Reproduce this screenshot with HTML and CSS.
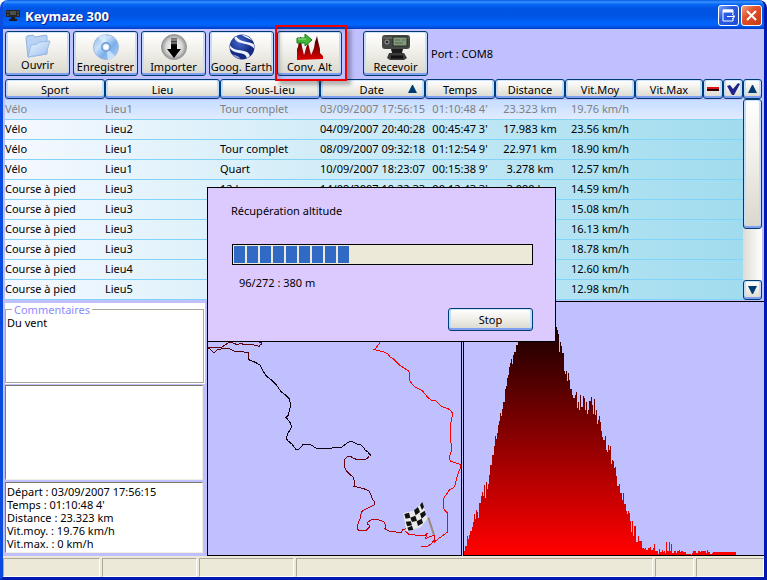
FILE: index.html
```html
<!DOCTYPE html>
<html lang="fr">

<head>
  <title>Keymaze 300</title>
  <meta charset="utf-8">
  <meta name="viewport" content="width=device-width, initial-scale=1">
  <link rel="stylesheet" href="styles.css">
</head>
<body>
  <div class="window">
    <header class="titlebar">
      <svg class="app-icon" viewBox="0 0 16 16" width="16" height="16">
        <rect x="1" y="2" width="14" height="7" rx="1" fill="#252525"/>
        <rect x="5" y="3" width="6" height="4" fill="#4c524a"/>
        <path d="M2 4h2M12 4h2M2 7h2M12 7h2" stroke="#666"/>
        <path d="M6 9h4v2h2v2H4v-2h2z" fill="#1b1b1b"/>
      </svg>
      <h1>Keymaze 300</h1>
      <button class="win-btn" aria-label="Réduire">
        <svg viewBox="0 0 19 19" width="19" height="19">
          <path d="M14 8V4H4v11h10v-3" fill="none" stroke="#fff"/>
          <path d="M4 5h10" stroke="#fff" stroke-width="3"/>
          <path d="M8 10.500h7M13 8l3 2.500-3 2.500" fill="none" stroke="#fff"/>
        </svg>
      </button>
      <button class="win-btn close" aria-label="Fermer">
        <svg viewBox="0 0 19 19" width="19" height="19">
          <path d="M5 5l9 9M14 5l-9 9" stroke="#fff" stroke-width="2"/>
        </svg>
      </button>
    </header>

    <nav class="toolbar">
      <button class="btn tool open">
        <svg viewBox="0 0 26 24" width="26" height="24">
          <defs>
            <linearGradient id="folder" x1="0" y1="0" x2="1" y2="1">
              <stop offset="0" stop-color="#eaf4ff"/>
              <stop offset="1" stop-color="#9cc0ef"/>
            </linearGradient>
          </defs>
          <path d="M1 4l1-2 6-1 2 2 11-2 1 1v18L3 23z" fill="#b9d3f4" stroke="#8fb0dc"/>
          <path d="M3 23l3-12 6-1 2-2 11-1-4 13z" fill="url(#folder)" stroke="#9ab9e4"/>
        </svg>
        Ouvrir
      </button>
      <button class="btn tool">
        <svg viewBox="0 0 26 26" width="26" height="26">
          <defs>
            <linearGradient id="disc" x1="0" y1="0" x2="1" y2="1">
              <stop offset="0" stop-color="#8bb4e4"/>
              <stop offset=".35" stop-color="#c8e2fa"/>
              <stop offset=".6" stop-color="#7caeea"/>
              <stop offset="1" stop-color="#b3d3f6"/>
            </linearGradient>
          </defs>
          <circle cx="13" cy="13" r="12.500" fill="url(#disc)" stroke="#9fb8d8"/>
          <path d="M13 13L5 3a13 13 0 0 1 8-3zM13 13l9 9a13 13 0 0 1-7 4z" fill="#dcefff" opacity=".7"/>
          <circle cx="13" cy="13" r="5" fill="#6e9fd8"/>
          <circle cx="13" cy="13" r="3" fill="#fff" stroke="#d5e4f4"/>
        </svg>
        Enregistrer
      </button>
      <button class="btn tool">
        <svg viewBox="0 0 26 26" width="26" height="26">
          <defs>
            <radialGradient id="ball">
              <stop offset="0" stop-color="#fff"/>
              <stop offset=".65" stop-color="#d8d8d8"/>
              <stop offset="1" stop-color="#909090"/>
            </radialGradient>
            <linearGradient id="arrow" x1="0" y1="0" x2="0" y2="1">
              <stop offset="0" stop-color="#777"/>
              <stop offset=".4" stop-color="#000"/>
            </linearGradient>
          </defs>
          <circle cx="13" cy="13" r="12.500" fill="url(#ball)" stroke="#999"/>
          <path d="M10 4h6v11h4l-7 9-7-9h4z" fill="url(#arrow)"/>
          <path d="M10 6h6M10 9h6" stroke="#aaa"/>
        </svg>
        Importer
      </button>
      <button class="btn tool">
        <svg viewBox="0 0 26 26" width="26" height="26">
          <defs>
            <radialGradient id="globe" cx=".4" cy=".3">
              <stop offset="0" stop-color="#4468cc"/>
              <stop offset="1" stop-color="#142a84"/>
            </radialGradient>
            <clipPath id="globe-clip"><circle cx="13" cy="13" r="12"/></clipPath>
          </defs>
          <circle cx="13" cy="13" r="12.500" fill="url(#globe)"/>
          <g clip-path="url(#globe-clip)" fill="#edf3fc">
            <path d="M5 2c0 7 9 7 15 9 3 1 5 3 6 5v-5C22 7 9 9 7 1z"/>
            <path d="M0 9c3 9 12 6 18 9 2 1 3 3 3 6l-3 1c-1-7-7-5-12-7-3-1-5-3-6-5z"/>
            <path d="M12 0c3 4 9 4 13 8l-1-4-7-4z"/>
            <path d="M1 18c2 3 6 3 9 5l2 3-4 0z" opacity=".6"/>
          </g>
        </svg>
        Goog. Earth
      </button>
      <div class="highlight">
        <button class="btn tool">
          <svg viewBox="0 0 28 26" width="28" height="26">
            <defs>
              <linearGradient id="peaks" x1="0" y1="0" x2="0" y2="1">
                <stop offset="0" stop-color="#300"/>
                <stop offset="1" stop-color="#e00000"/>
              </linearGradient>
            </defs>
            <path d="M1 26V15l1-2 1-6h1V3h1v4l1 6 1 4 1 4 1-3 1-4 2-5 1 4 1 4 1 4 1-2 2-5 1-6 2-6 1 5 1 4 1 4v4l3 3v3z" fill="url(#peaks)"/>
            <path d="M1 4h8V0l7 6-7 6V9H1z" fill="#3fb834" stroke="#197c18"/>
            <path d="M2 5h8" stroke="#a0e890"/>
          </svg>
          Conv. Alt
        </button>
      </div>
      <button class="btn tool receive">
        <svg viewBox="0 0 30 26" width="30" height="26">
          <rect x="1" y="1" width="28" height="14" rx="3" fill="#444845"/>
          <path d="M2 4h26" stroke="#777a76"/>
          <rect x="12" y="3" width="14" height="9" fill="#84997c" stroke="#272b27"/>
          <path d="M14 6h5M14 9h8M21 6h3" stroke="#53684e"/>
          <circle cx="6" cy="8" r="2" fill="#222" stroke="#aaa"/>
          <path d="M10 15h12l-1 4H11z" fill="#1b1b1b"/>
          <path d="M8 19h15l3 5-3 2H9l-3-2z" fill="#3b3b3b"/>
          <path d="M10 23h12" stroke="#111" stroke-width="3"/>
        </svg>
        Recevoir
      </button>
      <span class="port">Port : COM8</span>
    </nav>

    <section class="sessions">
      <table class="grid">
        <colgroup>
          <col class="c-sport"><col class="c-lieu"><col class="c-sub"><col class="c-date"><col class="c-num"><col class="c-num"><col class="c-num"><col><col class="c-icon"><col class="c-icon">
        </colgroup>
        <thead>
          <tr>
            <th><button class="btn head">Sport</button></th>
            <th><button class="btn head">Lieu</button></th>
            <th><button class="btn head">Sous-Lieu</button></th>
            <th><button class="btn head sorted">Date
              <svg viewBox="0 0 9 8" width="9" height="8"><path d="M4 0h1l4 8H0z" fill="#003c74"/></svg></button></th>
            <th><button class="btn head">Temps</button></th>
            <th><button class="btn head">Distance</button></th>
            <th><button class="btn head">Vit.Moy</button></th>
            <th><button class="btn head">Vit.Max</button></th>
            <th><button class="btn head" aria-label="Supprimer">
              <svg viewBox="0 0 12 4" width="12" height="4"><path d="M0 0h12v4H0z" fill="#300"/><path d="M0 0h12v2H0z" fill="#e01010"/></svg></button></th>
            <th><button class="btn head" aria-label="Valider">
              <svg viewBox="0 0 13 12" width="13" height="12"><path d="M0 3l3-1 3 4 5-6 2 1-6 11H5z" fill="#22228c"/></svg></button></th>
          </tr>
        </thead>
        <tbody>
          <tr class="selected"><td>Vélo</td><td>Lieu1</td><td>Tour complet</td><td>03/09/2007 17:56:15</td><td>01:10:48 4'</td><td>23.323 km</td><td>19.76 km/h</td><td colspan="3"></td></tr>
          <tr><td>Vélo</td><td>Lieu2</td><td></td><td>04/09/2007 20:40:28</td><td>00:45:47 3'</td><td>17.983 km</td><td>23.56 km/h</td><td colspan="3"></td></tr>
          <tr><td>Vélo</td><td>Lieu1</td><td>Tour complet</td><td>08/09/2007 09:32:18</td><td>01:12:54 9'</td><td>22.971 km</td><td>18.90 km/h</td><td colspan="3"></td></tr>
          <tr><td>Vélo</td><td>Lieu1</td><td>Quart</td><td>10/09/2007 18:23:07</td><td>00:15:38 9'</td><td>3.278 km</td><td>12.57 km/h</td><td colspan="3"></td></tr>
          <tr><td>Course à pied</td><td>Lieu3</td><td>12 km</td><td>14/09/2007 19:22:33</td><td>00:12:43 3'</td><td>3.090 km</td><td>14.59 km/h</td><td colspan="3"></td></tr>
          <tr><td>Course à pied</td><td>Lieu3</td><td></td><td></td><td></td><td></td><td>15.08 km/h</td><td colspan="3"></td></tr>
          <tr><td>Course à pied</td><td>Lieu3</td><td></td><td></td><td></td><td></td><td>16.13 km/h</td><td colspan="3"></td></tr>
          <tr><td>Course à pied</td><td>Lieu3</td><td></td><td></td><td></td><td></td><td>18.78 km/h</td><td colspan="3"></td></tr>
          <tr><td>Course à pied</td><td>Lieu4</td><td></td><td></td><td></td><td></td><td>12.60 km/h</td><td colspan="3"></td></tr>
          <tr><td>Course à pied</td><td>Lieu5</td><td></td><td></td><td></td><td></td><td>12.98 km/h</td><td colspan="3"></td></tr>
        </tbody>
      </table>
      <div class="scrollbar">
        <button class="btn head" aria-label="Monter">
          <svg viewBox="0 0 9 8" width="9" height="8"><path d="M4 0h1l4 8H0z" fill="#003c74"/></svg>
        </button>
        <div class="track"><div class="btn thumb"></div></div>
        <button class="btn head" aria-label="Descendre">
          <svg viewBox="0 0 9 8" width="9" height="8"><path d="M0 0h9L5 8H4z" fill="#003c74"/></svg>
        </button>
      </div>
    </section>

    <main class="panels">
      <div class="sidebar">
        <div class="comments">
          <fieldset>
            <legend><label for="comment">Commentaires</label></legend>
            <textarea id="comment">Du vent</textarea>
          </fieldset>
        </div>
        <div class="box"></div>
        <div class="box">
          Départ : 03/09/2007 17:56:15<br>
          Temps : 01:10:48 4'<br>
          Distance : 23.323 km<br>
          Vit.moy. : 19.76 km/h<br>
          Vit.max. : 0 km/h
        </div>
      </div>

      <div class="map">
        <svg viewBox="24 -99 759 759" preserveAspectRatio="xMidYMax meet">
          <g fill="none" stroke-width="3" shape-rendering="crispEdges">
            <path stroke="#600010" d="M24 36h12l6 3 12-3h12l9-6 9-6 6-2 9 2 12 5 12-4 9 4h27l12 3 6 3 3-6 3 0V22h-6"/>
            <path stroke="#500008" d="M24 39l6 3 12 12 9-9 18-4h18l18 9 12-1 24 3h3v18l6 6"/>
            <path stroke="#100010" d="M144 69l6 6 18 8 12 7 9 18 9 14 15 12 18 18 12 18 12 9 12 11 3 10v18l-6 24-6 5 12 15 3 9v9l-9 15-6 14 6 9 12 9 12 16h9l12-14 12-2 12 3 15 9 39 3 18-6 12 2 9-2 15-12 12-6 9 4 9 5h9l9 8 6 10 9 6 6 8v5"/>
            <path stroke="#600010" d="M507 365l-6 6-9 3h-21l-12-5-9-6h-6l-9 9-1 24 6 12 12 12 9 8 3 23-3 3 15 3 15 4 15 6 6 9 3 12 8 12v9"/>
            <path stroke="#b80008" d="M523 509l-12 6-12 6-12 6-6 15v9l-6 12-4 18 6 5h21l9-8 1-7-5-3v-6l12-9h15l12 4 9 3 6 10 1 6-4 6 9 4 9 4 33 2 3-8 9-3"/>
            <path stroke="#e8000c" d="M616 588l9 9 21 3 12 1 9-1h9l6-6-6 18 12-7 12-3h4v12l-10 12-12 9h-18"/>
            <path stroke="#f00" d="M540 23l-12 16-6 5 6 1 27 7 9 5 6 9 9 4 18 19 27 18 4 5v22l9 15 9 8 21 10 18 22 9 6 12 1 18 18 24 9 8 9 2 6-7 33v51l3 3v22l-6 20 3 12 30 9v12l-9 21-3 15-6 20-9 6-6 3-9 14-6 6-4 12v18l6 12 6 6v59l-27 20-12 10"/>
          </g>
          <path d="M685 548l17 52" stroke="#9a8878" stroke-width="6"/>
          <path d="M610 535l35-9 22-25 15 50-20 26-43 13z" fill="#e8e8e8"/>
          <path d="M613 537l14-4 4 15-14 3zM642 526l12-10 6 15-13 10zM660 510l7-9 5 15-6 9zM631 548l15-6 5 15-15 4zM660 536l14-9 4 12-13 12zM617 560l15-1 4 12-14 3zM650 559l15-8 4 13-15 9zM622 578l14-6 4 12-14 3z" fill="#111"/>
        </svg>
      </div>

      <div class="profile">
        <svg viewBox="27 21 900 759" preserveAspectRatio="none">
          <defs>
            <linearGradient id="altitude" gradientUnits="userSpaceOnUse" x1="0" y1="70" x2="0" y2="770">
              <stop offset="0" stop-color="#100000"/>
              <stop offset="1" stop-color="#f00"/>
            </linearGradient>
          </defs>
          <path fill="url(#altitude)" shape-rendering="crispEdges" d="M27 780V768H30V753H36V723H39V732H42V720H45V708H51V696H54V681H57V657H60V672H63V645H66V651H69V669H72V624H78V603H81V591H84V603H87V570H90V609H93V561H96V582H99V567H102V540H105V510H111V480H117V453H120V423H123V432H126V414H129V390H132V378H135V354H138V363H141V342H144V321H150V282H153V273H156V249H159V240H162V216H165V204H168V192H171V207H174V180H177V171H183V150H189V120H240V96H306V105H309V117H312V171H315V141H318V153H321V174H327V228H330V237H333V228H336V258H339V234H342V255H345V282H351V300H354V309H360V300H363V291H366V339H369V321H372V345H375V300H378V336H384V303H387V309H390V345H393V321H396V357H399V345H402V318H408V306H411V330H414V357H417V312H420V360H423V345H426V387H429V375H432V363H435V381H438V408H441V426H444V435H450V423H453V465H456V471H459V450H462V465H465V453H468V507H471V495H474V498H477V519H480V516H483V543H486V573H492V567H495V594H501V615H504V594H507V627H513V648H516V657H519V648H522V654H525V678H528V711H531V678H534V723H537V693H543V741H549V723H552V738H561V759H567V762H570V759H573V765H579V759H585V756H588V765H594V759H597V747H600V768H609V777H612V762H615V771H621V765H624V771H627V768H630V774H633V741H636V768H642V741H645V768H648V747H651V774H657V768H663V774H666V768H672V765H675V771H678V768H684V771H693V777H708V780H711V774H714V768H723V774H729V768H735V771H738V768H753V774H756V765H759V771H765V777H771V774H774V771H843V780z"/>
        </svg>
      </div>
    </main>

    <footer class="statusbar">
      <span></span><span></span><span></span><span></span><span></span><span></span>
    </footer>

    <dialog class="progress-dialog" open>
      <p id="progress-label">Récupération altitude</p>
      <div class="progress" role="progressbar" aria-labelledby="progress-label" aria-valuemin="0" aria-valuemax="272" aria-valuenow="96">
        <div class="bar" style="width: 39%"></div>
      </div>
      <p class="count">96/272 : 380 m</p>
      <button class="btn stop">Stop</button>
    </dialog>
  </div>
</body>

</html>
```
FILE: styles.css
```css
*,
*::after {
  box-sizing: border-box;
}
body {
  margin: 0;
  background: #fff;
  font-family: "Noto Sans", Tahoma, sans-serif;
  font-size: 11px;
  line-height: 13px;
  color: #000;
}
button,
textarea {
  font: inherit;
  color: inherit;
}
svg {
  display: block;
}
p {
  margin: 0;
}
.window {
  position: relative;
  display: flex;
  flex-direction: column;
  min-height: 100vh;
  border: solid #0831d9;
  border-width: 0 3px 3px;
  border-color: #0831d9 #0019b0 #0019b0 #0a4be0;
  border-radius: 8px 8px 0 0;
  background: #c0c0ff;
  overflow: hidden;
}

/* title bar */
.titlebar {
  display: flex;
  align-items: center;
  gap: 2px;
  height: 29px;
  margin: 0 -3px;
  padding: 2px 5px 0;
  background: linear-gradient(#0058e6 0, #3a93ff 2px, #0a6af6 4px, #0055e5 8px, #0054e3 16px, #0066ff 24px, #005bf0 26px, #003dc4 29px);
}
.app-icon {
  margin-right: 2px;
}
.titlebar h1 {
  flex: 1;
  margin: 0;
  font-size: 13px;
  line-height: 18px;
  color: #fff;
  text-shadow: 1px 1px #0a1883;
}
.win-btn {
  width: 21px;
  height: 21px;
  padding: 0;
  border: 1px solid #fff;
  border-radius: 3px;
  background: linear-gradient(135deg, #7ba0f5, #2a5be0 40%, #1c4fd8);
}
.win-btn.close {
  background: linear-gradient(135deg, #f0a080, #e0502c 40%, #c83a10);
}

/* XP look for every push button */
.btn {
  display: flex;
  align-items: center;
  justify-content: center;
  padding: 0;
  border: 1px solid #003c74;
  border-radius: 3px;
  background: linear-gradient(#fff, #f2f1ec 40%, #d9d7cc);
  box-shadow: inset 0 -2px #7f9ff0, inset 2px 0 #c3dcfb, inset -2px 0 #c3dcfb, inset 0 1px #cfe4ff;
  white-space: nowrap;
}

.toolbar {
  display: flex;
  gap: 3px;
  padding: 2px 2px 3px;
}
.tool {
  flex-direction: column;
  justify-content: flex-end;
  width: 65px;
  height: 45px;
  padding-bottom: 2px;
}
.open {
  padding-bottom: 4px;
}
.highlight {
  position: relative;
}
.highlight::after {
  content: "";
  position: absolute;
  top: -6px;
  left: -2px;
  width: 72px;
  height: 56px;
  border: 2px solid #f00000;
  box-shadow: 4px 4px 4px rgba(0, 0, 0, .3), inset 3px 3px 4px rgba(0, 0, 0, .2);
}
.receive {
  margin-left: 18px;
}
.port {
  align-self: center;
}

/* sessions list */
.sessions {
  display: flex;
  padding: 0 2px;
}
.grid {
  flex: 1;
  table-layout: fixed;
  width: 100%;
  border-collapse: separate;
  border-spacing: 0;
}
.c-sport { width: 100px; }
.c-lieu { width: 115px; }
.c-sub { width: 100px; }
.c-date { width: 105px; }
.c-num { width: 70px; }
.c-icon { width: 20px; }
.grid th {
  height: 21px;
  padding: 0 0 1px;
  font-weight: normal;
}
.head {
  width: 100%;
  height: 20px;
}
.sorted {
  justify-content: flex-end;
  gap: 24px;
  padding-right: 7px;
}
.grid tbody {
  background: linear-gradient(to right, #f6f9ff, #a0dcee);
}
.grid td {
  height: 20px;
  padding: 0 0 2px;
  border-bottom: 1px solid #80d4fa;
  white-space: nowrap;
}
.grid td:nth-child(n+4) {
  text-align: center;
}
.selected {
  color: #808080;
  background: linear-gradient(#c6deff, #e2ecff);
}
.scrollbar {
  display: flex;
  flex-direction: column;
  width: 19px;
}
.track {
  flex: 1;
  background: linear-gradient(to right, #dddcd4, #fff);
}
.thumb {
  height: 72%;
}

/* lower panels */
.panels {
  flex: 1;
  display: grid;
  grid-template-columns: 202px 256px 1fr;
  column-gap: 1px;
  padding-top: 1px;
}
.map {
  margin-left: 1px;
}
.sidebar {
  display: grid;
  grid-template-rows: 81px 96px 1fr;
  gap: 1px;
  padding: 2px 0 2px 2px;
}
.comments {
  padding: 0 1px 1px 0;
  background: #fff;
}
.comments fieldset {
  min-width: 0;
  height: 100%;
  margin: 0;
  padding: 0 1px;
  border: 1px solid #aca899;
}
.comments legend {
  margin-left: 5px;
  padding: 0 2px;
  color: #8c8cff;
}
.comments textarea {
  display: block;
  width: 100%;
  height: 60px;
  padding: 0;
  border: 0;
  resize: none;
}
.box {
  margin: 0 2px 1px 0;
  padding: 2px 0 0 1px;
  border: 1px solid;
  border-color: #7c7868 #f1efe2 #f1efe2 #7c7868;
  background: #fff;
}
.map,
.profile {
  position: relative;
  min-height: 255px;
  border: 1px solid #000;
}
.profile {
  border-right: 0;
}
.map svg,
.profile svg {
  position: absolute;
  width: 100%;
  height: 100%;
}

.statusbar {
  display: grid;
  grid-template-columns: 97px 95px 95px 1fr 39px 68px;
  gap: 2px;
  height: 21px;
  padding-top: 2px;
  background: #ece9d8;
}
.statusbar span {
  border: 1px solid;
  border-color: #aca899 #fff #fff #aca899;
}

/* floats over the list and the map */
.progress-dialog {
  position: absolute;
  top: 187px;
  left: 204px;
  width: 349px;
  margin: 0;
  padding: 16px 22px 10px 23px;
  border: 1px solid #000;
  background: #dccaff;
  color: #000;
}
.progress {
  height: 21px;
  margin: 27px 0 11px 1px;
  padding: 1px;
  border: 1px solid #000;
  background: #ece9d8;
}
.bar {
  height: 100%;
  background: repeating-linear-gradient(to right, #316ac5 0, #316ac5 11px, transparent 11px, transparent 13px);
}
.count {
  padding-left: 8px;
}
.stop {
  width: 85px;
  height: 23px;
  margin: 19px 0 0 auto;
}
```
